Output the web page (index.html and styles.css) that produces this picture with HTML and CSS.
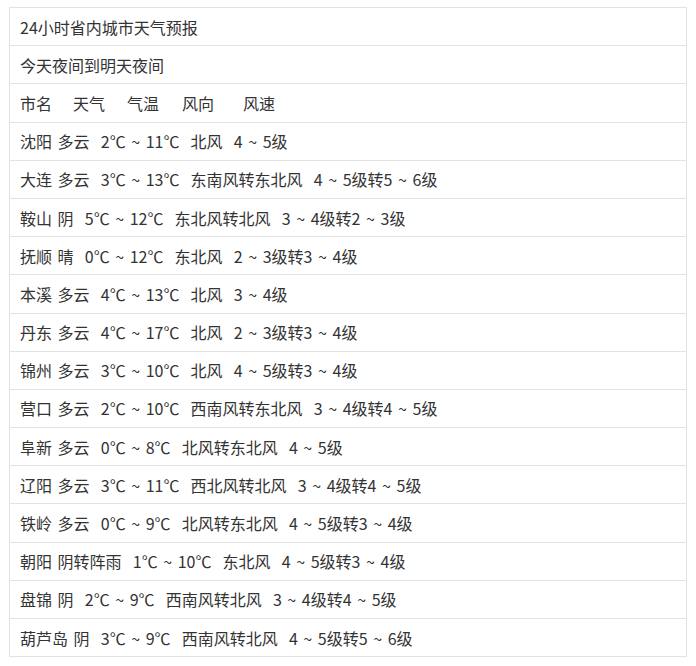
FILE: index.html
```html
<!DOCTYPE html>
<html lang="zh">
<head>
<meta charset="utf-8">
<link rel="stylesheet" href="styles.css">
</head>
<body>
<div class="table">
  <div class="row">24小时省内城市天气预报</div>
  <div class="row">今天夜间到明天夜间</div>
  <div class="row head"><span class="c1">市名</span><span class="c2">天气</span><span class="c3">气温</span><span class="c4">风向</span><span>风速</span></div>
  <div class="row">沈阳 多云  2℃ ~ 11℃  北风  4 ~ 5级</div>
  <div class="row">大连 多云  3℃ ~ 13℃  东南风转东北风  4 ~ 5级转5 ~ 6级</div>
  <div class="row">鞍山 阴  5℃ ~ 12℃  东北风转北风  3 ~ 4级转2 ~ 3级</div>
  <div class="row">抚顺 晴  0℃ ~ 12℃  东北风  2 ~ 3级转3 ~ 4级</div>
  <div class="row">本溪 多云  4℃ ~ 13℃  北风  3 ~ 4级</div>
  <div class="row">丹东 多云  4℃ ~ 17℃  北风  2 ~ 3级转3 ~ 4级</div>
  <div class="row">锦州 多云  3℃ ~ 10℃  北风  4 ~ 5级转3 ~ 4级</div>
  <div class="row">营口 多云  2℃ ~ 10℃  西南风转东北风  3 ~ 4级转4 ~ 5级</div>
  <div class="row">阜新 多云  0℃ ~ 8℃  北风转东北风  4 ~ 5级</div>
  <div class="row">辽阳 多云  3℃ ~ 11℃  西北风转北风  3 ~ 4级转4 ~ 5级</div>
  <div class="row">铁岭 多云  0℃ ~ 9℃  北风转东北风  4 ~ 5级转3 ~ 4级</div>
  <div class="row">朝阳 阴转阵雨  1℃ ~ 10℃  东北风  4 ~ 5级转3 ~ 4级</div>
  <div class="row">盘锦 阴  2℃ ~ 9℃  西南风转北风  3 ~ 4级转4 ~ 5级</div>
  <div class="row">葫芦岛 阴  3℃ ~ 9℃  西南风转北风  4 ~ 5级转5 ~ 6级</div>
</div>
</body>
</html>
```
FILE: styles.css
```css
html, body {
  margin: 0;
  padding: 0;
  background: #fff;
}
body {
  font-family: "Noto Sans CJK SC", "Noto Sans", sans-serif;
  font-size: 16px;
  color: #333;
}
.table {
  margin: 7px 0 0 9px;
  width: 676px;
  border: 1px solid #e3e3e3;
  border-bottom: none;
  display: flex;
  flex-direction: column;
}
.row {
  height: 37.2px;
  border-bottom: 1px solid #e3e3e3;
  padding: 0 10px;
  display: flex;
  align-items: center;
  white-space: pre;
  word-spacing: 2px;
  line-height: 1;
}
.head .c1 { margin-right: 21px; }
.head .c2 { margin-right: 22px; }
.head .c3 { margin-right: 23px; }
.head .c4 { margin-right: 29px; }
```
